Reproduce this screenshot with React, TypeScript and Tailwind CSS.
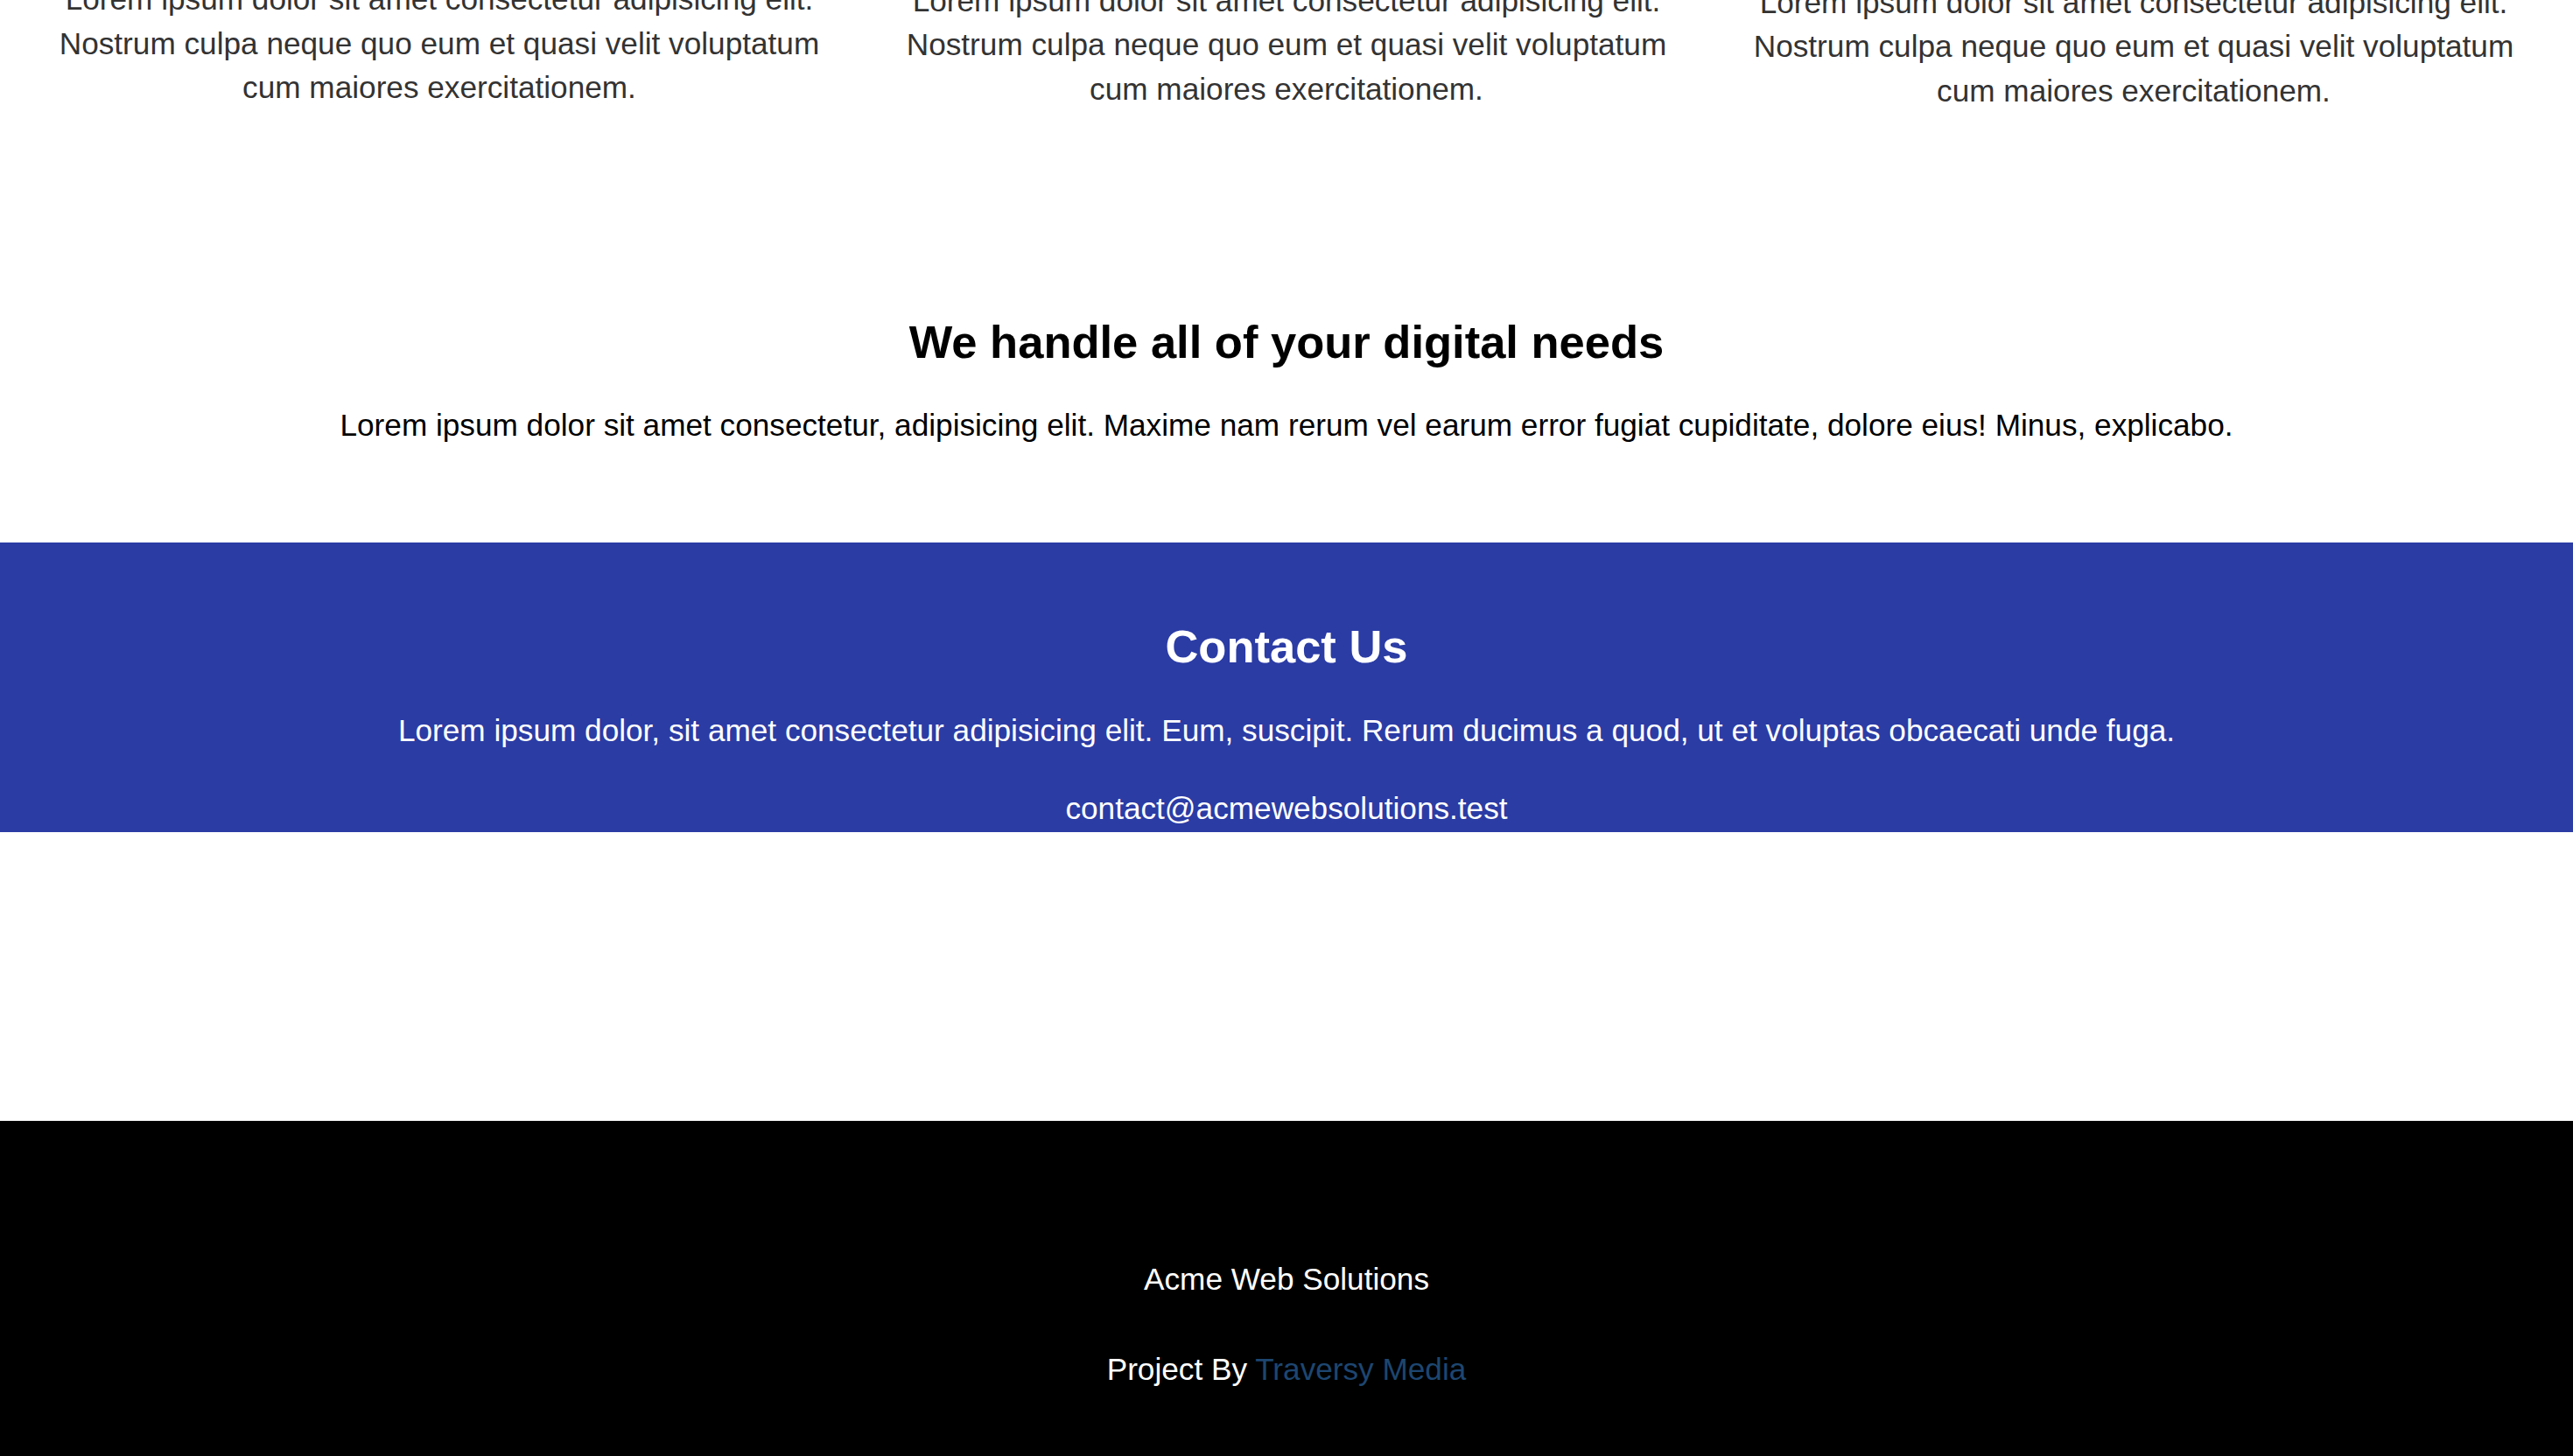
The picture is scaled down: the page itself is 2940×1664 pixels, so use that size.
import React from "react"

const features = [
  { id: 1, offset: "pt-0" },
  { id: 2, offset: "pt-[1.5px]" },
  { id: 3, offset: "pt-[3.5px]" },
]

function Features() {
  return (
    <section className="overflow-hidden">
      <div className="-mt-[26px] grid grid-cols-3 px-[18px]">
        {features.map((f) => (
          <div key={f.id} className={`px-[37px] text-center ${f.offset}`}>
            <p className="text-[35.2px] leading-[50.6px] text-[#333333]">
              Lorem ipsum dolor sit amet consectetur adipisicing elit. Nostrum culpa neque quo eum et quasi velit
              voluptatum cum maiores exercitationem.
            </p>
          </div>
        ))}
      </div>
    </section>
  )
}

function Needs() {
  return (
    <section className="pt-[232px] pb-[114px] text-center text-black">
      <h2 className="text-[52.5px] font-bold leading-[60px]">We handle all of your digital needs</h2>
      <p className="mt-[45px] text-[35.2px] leading-[40px]">
        Lorem ipsum dolor sit amet consectetur, adipisicing elit. Maxime nam rerum vel earum error fugiat cupiditate,
        dolore eius! Minus, explicabo.
      </p>
    </section>
  )
}

function Contact() {
  return (
    <section className="bg-[#2b3ca5] pt-[89px] pb-[7px] text-center text-white">
      <h2 className="text-[52.5px] font-bold leading-[60px]">Contact Us</h2>
      <p className="mt-[46px] text-[35.2px] leading-[40px]">
        Lorem ipsum dolor, sit amet consectetur adipisicing elit. Eum, suscipit. Rerum ducimus a quod, ut et voluptas
        obcaecati unde fuga.
      </p>
      <p className="mt-[49px] text-[35.2px] leading-[40px]">contact@acmewebsolutions.test</p>
    </section>
  )
}

function Footer() {
  return (
    <footer className="mt-[330px] bg-black pt-[161px] pb-[79px] text-center text-[35.2px] leading-[40px] text-white">
      <p>Acme Web Solutions</p>
      <p className="mt-[63px]">
        Project By <a className="text-[#1d4670]">Traversy Media</a>
      </p>
    </footer>
  )
}

export default function App() {
  return (
    <div className="min-h-[1664px] bg-white font-['Liberation_Sans',Arial,sans-serif]">
      <Features />
      <Needs />
      <Contact />
      <Footer />
    </div>
  )
}
